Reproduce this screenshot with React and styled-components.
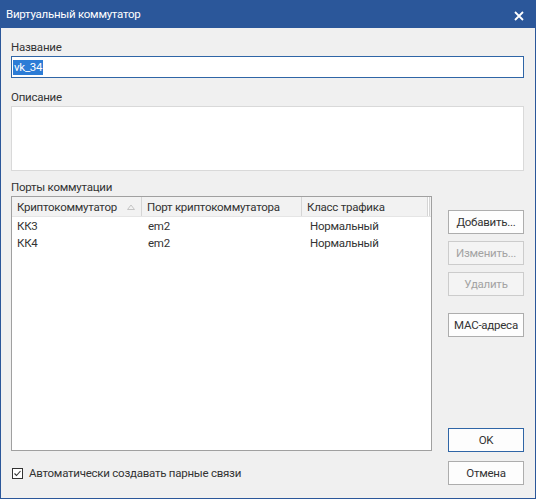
import React from "react";
import styled, { createGlobalStyle } from "styled-components";

const GlobalStyle = createGlobalStyle`
    html, body {
        margin: 0;
        padding: 0;
        background: #ffffff;
    }
    body {
        font-family: Roboto, "Noto Sans", sans-serif;
        font-size: 11.5px;
        letter-spacing: -0.25px;
        color: #333333;
    }
`;

const Window = styled.div`
    width: 536px;
    height: 499px;
    box-sizing: border-box;
    border: 1px solid #2b579a;
    border-top: none;
    background: #f0f0f0;
    display: flex;
    flex-direction: column;
`;

const TitleBar = styled.div`
    height: 28px;
    margin: 0 -1px;
    background: #2b579a;
    color: #ffffff;
    display: flex;
    align-items: center;
    justify-content: space-between;
    padding: 0 12px 0 6px;
`;

const CloseButton = styled.span`
    display: flex;
    align-items: center;
    margin-top: 3px;
`;

const Body = styled.div`
    flex: 1;
    display: flex;
    flex-direction: column;
    padding: 11px 11px 0 10px;
`;

const Label = styled.div`
    height: 16px;
    line-height: 16px;
    margin-top: ${(p) => p.$top || 0}px;
    margin-bottom: 1px;
`;

const TextInput = styled.div`
    height: 22px;
    box-sizing: border-box;
    border: 1px solid ${(p) => (p.$focused ? "#2f65a6" : "#d9d9d9")};
    background: #ffffff;
    display: flex;
    align-items: center;
    padding-left: 1px;
`;

const Selection = styled.span`
    background: #2c7cd6;
    color: #ffffff;
    line-height: 15px;
    padding: 0 1px;
`;

const TextArea = styled.div`
    height: 65px;
    box-sizing: border-box;
    border: 1px solid #d9d9d9;
    background: #ffffff;
`;

const PortsRow = styled.div`
    display: flex;
    gap: 16px;
`;

const LeftColumn = styled.div`
    width: 421px;
    display: flex;
    flex-direction: column;
`;

const ListView = styled.div`
    height: 255px;
    box-sizing: border-box;
    border: 1px solid #a0a0a0;
    background: #ffffff;
`;

const HeaderRow = styled.div`
    display: flex;
    height: 19px;
    border-bottom: 1px solid #e5e5e5;
`;

const HeaderCell = styled.div`
    width: ${(p) => p.$w}px;
    flex-shrink: 0;
    box-sizing: border-box;
    border-right: 1px solid #d5d5d5;
    padding: 0 6px 0 5px;
    display: flex;
    align-items: center;
    justify-content: space-between;
    white-space: nowrap;
    overflow: hidden;
    background: #f2f2f2;
`;

const HeaderFiller = styled.div`
    flex: 1;
    background: #f2f2f2;
    border-left: 1px solid #d5d5d5;
    margin-left: 1px;
`;

const DataRow = styled.div`
    display: flex;
    height: 17px;
    align-items: center;
`;

const DataCell = styled.div`
    width: ${(p) => p.$w}px;
    flex-shrink: 0;
    box-sizing: border-box;
    padding-left: ${(p) => p.$pad}px;
    white-space: nowrap;
`;

const CheckRow = styled.div`
    display: flex;
    align-items: center;
    gap: 6px;
    margin-top: 15px;
    margin-left: 1px;
`;

const CheckBox = styled.span`
    width: 11px;
    height: 11px;
    box-sizing: border-box;
    border: 1px solid #333333;
    background: #ffffff;
    display: flex;
    align-items: center;
    justify-content: center;
`;

const ButtonColumn = styled.div`
    display: flex;
    flex-direction: column;
    width: 76px;
`;

const Button = styled.div`
    height: 24px;
    box-sizing: border-box;
    margin-top: ${(p) => p.$top}px;
    border: 1px solid ${(p) => (p.$primary ? "#2f65a6" : p.$disabled ? "#cccccc" : "#adadad")};
    background: ${(p) => (p.$disabled ? "#f4f4f4" : "#fdfdfd")};
    color: ${(p) => (p.$disabled ? "#a3a3a3" : "#333333")};
    display: flex;
    align-items: center;
    justify-content: center;
    white-space: nowrap;
`;

const columns = [
    { title: "Криптокоммутатор", width: 130, sorted: true },
    { title: "Порт криптокоммутатора", width: 160 },
    { title: "Класс трафика", width: 126 },
];

const rows = [
    ["КК3", "em2", "Нормальный"],
    ["КК4", "em2", "Нормальный"],
];

const cellPad = [5, 6, 8];

export default function App() {
    return (
        <>
            <GlobalStyle />
            <Window>
                <TitleBar>
                    <span>Виртуальный коммутатор</span>
                    <CloseButton>
                        <svg width="10" height="10" viewBox="0 0 10 10">
                            <path d="M1 1 L9 9 M9 1 L1 9" stroke="#ffffff" strokeWidth="1.8" />
                        </svg>
                    </CloseButton>
                </TitleBar>
                <Body>
                    <Label>Название</Label>
                    <TextInput $focused>
                        <Selection>vk_34</Selection>
                    </TextInput>
                    <Label $top={11}>Описание</Label>
                    <TextArea />
                    <Label $top={8}>Порты коммутации</Label>
                    <PortsRow>
                        <LeftColumn>
                            <ListView>
                                <HeaderRow>
                                    {columns.map((col) => (
                                        <HeaderCell key={col.title} $w={col.width}>
                                            <span>{col.title}</span>
                                            {col.sorted && (
                                                <svg width="8" height="6" viewBox="0 0 8 6">
                                                    <path d="M0.5 5.5 L4 1 L7.5 5.5 Z" fill="none" stroke="#c4c4c4" strokeWidth="1" />
                                                </svg>
                                            )}
                                        </HeaderCell>
                                    ))}
                                    <HeaderFiller />
                                </HeaderRow>
                                {rows.map((row) => (
                                    <DataRow key={row[0]}>
                                        {row.map((value, i) => (
                                            <DataCell key={i} $w={columns[i].width} $pad={cellPad[i]}>
                                                {value}
                                            </DataCell>
                                        ))}
                                    </DataRow>
                                ))}
                            </ListView>
                            <CheckRow>
                                <CheckBox>
                                    <svg width="9" height="9" viewBox="0 0 9 9">
                                        <path d="M1.5 4.5 L3.5 6.5 L7.5 2" fill="none" stroke="#333333" strokeWidth="1.1" />
                                    </svg>
                                </CheckBox>
                                <span>Автоматически создавать парные связи</span>
                            </CheckRow>
                        </LeftColumn>
                        <ButtonColumn>
                            <Button $top={14}>Добавить...</Button>
                            <Button $top={7} $disabled>Изменить...</Button>
                            <Button $top={7} $disabled>Удалить</Button>
                            <Button $top={17}>MAC-адреса</Button>
                            <Button $top={91} $primary>OK</Button>
                            <Button $top={9}>Отмена</Button>
                        </ButtonColumn>
                    </PortsRow>
                </Body>
            </Window>
        </>
    );
}
